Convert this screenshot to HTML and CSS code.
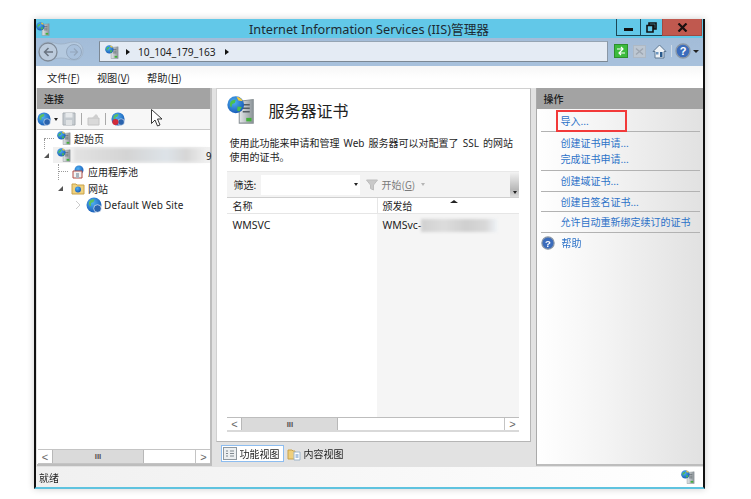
FILE: index.html
```html
<!DOCTYPE html>
<html lang="zh">
<head>
<meta charset="utf-8">
<title>IIS</title>
<link rel="stylesheet" href="styles.css">
</head>
<body>
<svg class="defs" width="0" height="0">
  <defs>
    <linearGradient id="srv" x1="0" x2="1" y1="0" y2="0"><stop offset="0" stop-color="#e6e9eb"/><stop offset="1" stop-color="#8b9398"/></linearGradient>
    <radialGradient id="glb" cx=".4" cy=".35" r=".7"><stop offset="0" stop-color="#4fb0f2"/><stop offset="1" stop-color="#1558b4"/></radialGradient>
    <symbol id="server" viewBox="0 0 16 16">
      <path d="M7 3l8-1v13.500l-8 0z" fill="url(#srv)" stroke="#8a9296" stroke-width=".6"/>
      <path d="M9 5h4M9 7h4M9 9h4" stroke="#555d62" stroke-width=".8"/>
      <rect x="11" y="12.500" width="3" height="2" fill="#43b03a"/>
      <circle cx="5" cy="5" r="4.800" fill="url(#glb)"/>
      <path d="M2 3.500c.8-1.200 2-1.500 3-1.300l-.5 1.800-1.500.5-.5 2C1.500 6 1.500 4.500 2 3.500zM6 6l2.500.3-1.500 2.500-1.200-.5z" fill="#4cc04a"/>
      <path d="M5.500.5c1.500 0 3 1 3.500 2.500l-2.500-.5z" fill="#f5cc3c"/>
    </symbol>
    <symbol id="globe" viewBox="0 0 16 16">
      <circle cx="8" cy="8" r="7.500" fill="url(#glb)"/>
      <path d="M3 5c1.500-2.500 4-3 5.500-2.500l-1 2.500-2.500 1 0 3C3.500 9.500 2.500 7 3 5zM9 8l4 .5-2 4-2-1z" fill="#5cc05e"/>
      <circle cx="11.500" cy="11.500" r="3.800" fill="#2a63ae" stroke="#fff" stroke-width=".6"/>
    </symbol>
  </defs>
</svg>

<div class="window">
  <header class="titlebar">
    <svg class="title-icon"><use href="#server"/></svg>
    <div class="title-text">Internet Information Services (IIS)管理器</div>
    <div class="win-buttons">
      <div class="win-btn min"><span class="min-glyph"></span></div>
      <div class="win-btn max"><svg width="11" height="11" viewBox="0 0 11 11"><path d="M3 1h7v6H8V3H3zM1 3.500h6v6.500H1z" fill="none" stroke="#111" stroke-width="1.600"/></svg></div>
      <div class="win-btn close"><svg width="11" height="9" viewBox="0 0 11 9"><path d="M1.500 .5l8 8M9.500 .5l-8 8" stroke="#1a1010" stroke-width="2.200"/></svg></div>
    </div>
  </header>

  <nav class="navbar">
    <div class="nav-arrows">
      <svg width="46" height="24" viewBox="0 0 46 24">
        <path d="M1 12c0-6 4-9 9-9 6 0 7 2 13 2s7-2 13-2c5 0 9 3 9 9s-4 9-9 9c-6 0-7-2-13-2s-7 2-13 2C5 21 1 18 1 12z" fill="#b4c9df" stroke="#a0b4ca"/>
        <circle cx="10" cy="13" r="9" fill="#bccbdc" stroke="#7f8a97" stroke-width="1.300"/>
        <path d="M15 13H6.500M10.500 9L6.500 13l4 4" fill="none" stroke="#6a7480" stroke-width="1.500"/>
        <circle cx="36" cy="13" r="7.500" fill="#a9c1dc" stroke="#94a8be"/>
        <path d="M32 13h7.500M36 9.500l3.500 3.500-3.500 3.500" fill="none" stroke="#93a6bb" stroke-width="1.200"/>
      </svg>
    </div>
    <div class="address">
      <svg class="ico14"><use href="#server"/></svg>
      <span class="tri"></span>
      <span class="addr-text">10_104_179_163</span>
      <span class="tri"></span>
    </div>
    <div class="nav-tools">
      <svg width="14" height="14" viewBox="0 0 14 14"><rect x=".5" y=".5" width="13" height="13" fill="#3cbb3c" stroke="#2d8f2d"/><path d="M3 5h6M7 3l2 2-2 2M11 9H5M7 7L5 9l2 2" fill="none" stroke="#fff" stroke-width="1.200"/></svg>
      <svg width="13" height="13" viewBox="0 0 13 13"><rect x=".5" y=".5" width="12" height="12" fill="#bdc7d2" stroke="#aeb9c5"/><path d="M3 3.500l7 6M10 3.500l-7 6" stroke="#9ea7b2" stroke-width="1.400"/></svg>
      <svg class="home" width="15" height="15" viewBox="0 0 15 15"><path d="M7.500 1L1 7.500h2V14h9V7.500h2z" fill="#eef2f6" stroke="#5e7892"/><rect x="8" y="8" width="2.500" height="5" fill="#2a5a8c"/><rect x="4" y="8" width="2.500" height="2.500" fill="#6c96c0"/></svg>
      <span class="tool-sep"></span>
      <svg width="16" height="16" viewBox="0 0 16 16"><circle cx="8" cy="8" r="7" fill="#3b6cbc" stroke="#8a97a6" stroke-width="1.400"/><text x="8" y="12" class="qmark">?</text></svg>
      <span class="down-tri"></span>
    </div>
  </nav>

  <div class="menubar">
    <span>文件(<u>F</u>)</span><span>视图(<u>V</u>)</span><span>帮助(<u>H</u>)</span>
  </div>

  <main class="main">
    <section class="panel left">
      <div class="panel-head">连接</div>
      <div class="conn-tools">
        <svg width="14" height="14" viewBox="0 0 16 16"><use href="#globe"/></svg>
        <span class="down-tri small"></span>
        <svg width="14" height="14" viewBox="0 0 14 14"><path d="M1 1h12v12H1z" fill="#c5cbd0" stroke="#a8aeb3"/><rect x="3.500" y="1" width="7" height="4.500" fill="#e7eaec"/><rect x="4" y="8" width="6" height="5" fill="#dfe2e4"/></svg>
        <span class="sep"></span>
        <svg width="13" height="13" viewBox="0 0 13 13"><path d="M1 5h11v7H1z" fill="#d9d9d9" stroke="#c4c4c4"/><path d="M5 5l4-4 2 2v2z" fill="#cfcfcf"/></svg>
        <span class="sep"></span>
        <svg width="14" height="14" viewBox="0 0 16 16"><use href="#globe"/><circle cx="5" cy="11.500" r="3.500" fill="#d22b3a"/></svg>
        <svg class="cursor" width="11" height="18" viewBox="0 0 11 18"><path d="M.5.500v14l3.500-3.500 2.500 6 2.500-1-2.500-6h4.500z" fill="#fff" stroke="#222" stroke-width=".9"/></svg>
      </div>
      <div class="tree">
        <div class="row lvl0"><span class="dots first-dots"></span><svg class="ico14"><use href="#server"/></svg><span>起始页</span></div>
        <div class="row lvl0 selected"><span class="exp-open"></span><svg class="ico14"><use href="#server"/></svg><span class="blurred name"></span><span class="nine">9</span></div>
        <div class="row lvl1"><span class="dots pool-dots"></span>
          <svg class="ico14" viewBox="0 0 14 14"><circle cx="8" cy="5" r="4.500" fill="url(#glb)"/><path d="M2 6h9v7H2z" fill="#f3f3f3" stroke="#b04a44"/><rect x="5" y="8" width="3" height="5" fill="#a8b4be"/></svg>
          <span>应用程序池</span></div>
        <div class="row lvl1"><span class="exp-open"></span>
          <svg class="ico14" viewBox="0 0 14 14"><path d="M1 3h4l1 1h7v9H1z" fill="#f0d27e" stroke="#c8a24a"/><circle cx="7" cy="8.500" r="3" fill="url(#glb)"/></svg>
          <span>网站</span></div>
        <div class="row lvl2"><span class="exp-closed"></span><svg class="ico15" viewBox="0 0 16 16"><use href="#globe"/></svg><span class="latin">Default Web Site</span></div>
      </div>
      <div class="scrollbar">
        <span class="sb-btn">&lt;</span>
        <span class="sb-thumb left-thumb">III</span>
        <span class="sb-track"></span>
        <span class="sb-btn">&gt;</span>
      </div>
    </section>

    <div class="center-col">
      <section class="panel center">
        <div class="page-head">
          <svg class="big-icon" viewBox="0 0 16 16"><use href="#server"/></svg>
          <h1>服务器证书</h1>
        </div>
        <p class="desc">使用此功能来申请和管理 Web 服务器可以对配置了 SSL 的网站<br>使用的证书。</p>
        <div class="list-box">
          <div class="filter">
            <span class="filter-label">筛选:</span>
            <div class="filter-input"><span class="down-tri small"></span></div>
            <svg width="12" height="12" viewBox="0 0 12 12"><path d="M.5 1h11L7.500 6v5l-3-1.500V6z" fill="#c9c9c9" stroke="#bdbdbd"/></svg>
            <span class="start">开始(<u>G</u>)</span>
            <span class="down-tri small pale"></span>
            <span class="filter-grip"><span class="down-tri small"></span></span>
          </div>
          <div class="list-head">
            <span class="col1">名称</span>
            <span class="col2">颁发给<span class="sort-up"></span></span>
          </div>
          <div class="list-body">
            <div class="col1 cell">WMSVC</div>
            <div class="col2 cell alt">WMSvc-<span class="blurred issuer"></span></div>
          </div>
          <div class="scrollbar inner">
            <span class="sb-btn">&lt;</span>
            <span class="sb-thumb center-thumb">III</span>
            <span class="sb-track"></span>
            <span class="sb-btn">&gt;</span>
          </div>
        </div>
      </section>
      <div class="tabs">
        <div class="tab active">
          <svg width="14" height="13" viewBox="0 0 14 13"><rect x=".5" y=".5" width="13" height="12" fill="#eceff1" stroke="#8f989f"/><path d="M3 4h2M3 6.500h2M3 9h2M7 4h4M7 6.500h4M7 9h4" stroke="#7f888f"/></svg>
          <span>功能视图</span>
        </div>
        <div class="tab">
          <svg width="14" height="14" viewBox="0 0 14 14"><path d="M1 3h4l1 1h2v8H1z" fill="#efcf7c" stroke="#c8a24a"/><path d="M7 5h6v8H7z" fill="#fff" stroke="#9db4c8"/><path d="M8.500 8h3M8.500 10h3" stroke="#5a8ac0"/></svg>
          <span>内容视图</span>
        </div>
      </div>
    </div>

    <section class="panel right">
      <div class="panel-head">操作</div>
      <ul class="actions">
        <li class="act first">导入...</li>
        <li class="act group top">创建证书申请...</li>
        <li class="act second">完成证书申请...</li>
        <li class="act group">创建域证书...</li>
        <li class="act group">创建自签名证书...</li>
        <li class="act group">允许自动重新绑定续订的证书</li>
        <li class="act group help">
          <svg width="14" height="14" viewBox="0 0 16 16"><circle cx="8" cy="8" r="7" fill="#3b6cbc" stroke="#8a97a6" stroke-width="1.400"/><text x="8" y="12" class="qmark">?</text></svg>
          帮助
        </li>
      </ul>
      <div class="highlight"></div>
    </section>
  </main>

  <footer class="statusbar">
    <span>就绪</span>
    <svg class="ico14"><use href="#server"/></svg>
  </footer>
</div>
</body>
</html>
```
FILE: styles.css
```css
* { box-sizing: border-box; }
html, body { margin: 0; padding: 0; background: #fff; }
body {
  width: 751px;
  height: 499px;
  overflow: hidden;
  padding: 19px 0 0 34px;
  font-family: "Noto Sans CJK SC", "Noto Sans", sans-serif;
  font-size: 10px;
  color: #1e1e1e;
}
u { text-decoration: underline; text-underline-offset: 1px; }
.defs { position: absolute; }
.ico14 { width: 14px; height: 14px; flex: none; }
.ico15 { width: 16px; height: 16px; flex: none; margin-right: -1px; }

.window {
  width: 671px;
  height: 470px;
  display: flex;
  flex-direction: column;
  background: #e2e2e2;
  border-left: 2px solid #111;
  border-right: 2px solid #111;
  border-bottom: 2px solid #5fc3df;
  box-shadow: 0 0 7px rgba(0, 0, 0, .2);
  filter: blur(.35px);
}

.titlebar {
  height: 19px;
  flex: none;
  background: #62c8e8;
  display: flex;
  align-items: center;
}
.title-icon { width: 14px; height: 14px; flex: none; }
.title-text {
  font-family: "Noto Sans", "Noto Sans CJK SC", sans-serif;
  font-size: 12.700px;
  color: #1d2b33;
  margin-left: 199px;
  white-space: nowrap;
  flex: 1;
}
.win-buttons { display: flex; height: 17px; align-self: flex-start; margin-right: 1px; }
.win-btn {
  height: 17px;
  display: flex;
  align-items: center;
  justify-content: center;
  border: 1px solid #1c4655;
  border-top: none;
}
.min { width: 24px; border-right: none; }
.max { width: 22px; border-right: none; }
.close { width: 40px; background: #c0594f; border-color: #9e4a42; }
.min-glyph { width: 9px; height: 3px; background: #111; margin-top: 4px; }

.navbar {
  height: 28px;
  flex: none;
  background: linear-gradient(#a3bcd8, #a8c1dc);
  display: flex;
  align-items: flex-start;
  padding: 3px 0 0 2px;
}
.nav-arrows { width: 46px; height: 22px; flex: none; margin-top: -2px; }
.address {
  width: 509px;
  height: 21px;
  flex: none;
  margin-left: 15px;
  background: #e4ebf4;
  border: 1px solid #7c8894;
  border-top-color: #95a4b3;
  border-right-color: #8997a6;
  display: flex;
  align-items: center;
  padding-left: 5px;
  font-size: 10.200px;
  font-family: "Noto Sans", sans-serif;
  color: #222;
}
.addr-text { margin: 0 9px 0 8px; }
.tri {
  width: 0;
  height: 0;
  margin-left: 7px;
  border-left: 4px solid #111;
  border-top: 3px solid transparent;
  border-bottom: 3px solid transparent;
}
.addr-text + .tri { margin-left: 0; }
.nav-tools { display: flex; flex: none; align-items: center; gap: 5px; margin-left: 6px; height: 20px; }
.home { margin-left: 1px; }
.tool-sep { width: 1px; height: 12px; background: #cfdbe7; margin: 0 -2px 0 -1px; }
.nav-tools .down-tri { margin-left: -3px; }
.down-tri {
  width: 0;
  height: 0;
  border-top: 3px solid #222;
  border-left: 3px solid transparent;
  border-right: 3px solid transparent;
}
.qmark { font: bold 11px "Liberation Sans", sans-serif; fill: #fff; text-anchor: middle; }

.menubar {
  height: 22px;
  flex: none;
  background: linear-gradient(#f7f7f7, #fff 60%);
  display: flex;
  align-items: center;
  gap: 17px;
  padding-left: 11px;
  font-size: 10.200px;
  white-space: nowrap;
}

.main {
  flex: 1;
  min-height: 0;
  display: flex;
  padding: 0 0 0 1px;
}
.panel { display: flex; flex-direction: column; position: relative; }
.panel-head {
  height: 21px;
  flex: none;
  background: #a3a3a3;
  display: flex;
  align-items: center;
  padding-left: 7px;
  font-weight: 500;
  color: #1a1a1a;
}

.left {
  width: 176px;
  background: #fff;
  border-right: 2px solid #bdbdbd;
  border-bottom: 2px solid #bdbdbd;
  margin-bottom: 1px;
}
.conn-tools {
  height: 21px;
  flex: none;
  display: flex;
  align-items: center;
  gap: 3px;
  padding-left: 0;
  background: #f7f7f7;
  border-bottom: 1px solid #c9c9c9;
  position: relative;
}
.conn-tools .small { margin-right: 1px; }
.sep { width: 1px; height: 12px; background: #a9a9a9; margin: 0 2px; }
.cursor { position: absolute; left: 114px; top: 0; }
.down-tri.small { border-width: 3px 2.500px 0; }
.pale { border-top-color: #b5b5b5; margin-left: 6px; }

.tree { flex: 1; }
.row {
  height: 16.700px;
  display: flex;
  align-items: center;
  gap: 3px;
  white-space: nowrap;
  position: relative;
}
.lvl0 { padding-left: 7px; }
.lvl1 { padding-left: 21px; }
.lvl2 { padding-left: 39px; }
.dots { width: 10px; border-top: 1px dotted #9a9a9a; flex: none; position: relative; }
.dots::before {
  content: "";
  position: absolute;
  left: 0;
  width: 0;
  border-left: 1px dotted #9a9a9a;
}
.first-dots::before { top: 0; height: 10px; }
.pool-dots::before { top: -8px; height: 16px; }
.exp-open {
  width: 0;
  height: 0;
  flex: none;
  margin-right: 5px;
  border-bottom: 5px solid #555;
  border-left: 5px solid transparent;
}
.exp-closed {
  width: 0;
  height: 0;
  flex: none;
  margin-right: 3px;
  border-left: 4px solid #fff;
  border-top: 4px solid transparent;
  border-bottom: 4px solid transparent;
  filter: drop-shadow(0 0 .5px #333);
}
.selected { background: linear-gradient(90deg, transparent 16px, #f0f0f0 16px); }
.latin { font-family: "Noto Sans", sans-serif; letter-spacing: .1px; }
.blurred { display: inline-block; filter: blur(1.500px); }
.name {
  width: 132px;
  height: 14px;
  background: linear-gradient(90deg, #e2e2e2, #d4d4d4 40%, #dde3e8 70%, #d6d6d6 85%, #eee);
}
.nine { position: absolute; left: 169px; }

.scrollbar {
  height: 15px;
  flex: none;
  display: flex;
  background: #fff;
  border-top: 1px solid #c4c4c4;
  border-bottom: 1px solid #c4c4c4;
  margin-left: 1px;
}
.sb-btn {
  width: 14px;
  flex: none;
  display: flex;
  align-items: center;
  justify-content: center;
  font-family: "Liberation Sans", sans-serif;
  color: #666;
  font-size: 11px;
}
.sb-thumb {
  flex: none;
  background: #dadada;
  border-left: 1px solid #b8b8b8;
  border-right: 1px solid #b8b8b8;
  display: flex;
  align-items: center;
  justify-content: center;
  font-family: "Liberation Sans", sans-serif;
  font-size: 8px;
  font-weight: bold;
  color: #555;
}
.left-thumb { width: 92px; }
.center-thumb { width: 97px; }
.sb-track { flex: 1; border-right: 1px solid #c4c4c4; }

.center-col {
  width: 315px;
  margin-left: 4px;
  display: flex;
  flex-direction: column;
}
.center {
  flex: none;
  height: 354px;
  background: #fff;
  border-right: 1px solid #b5b5b5;
  border-bottom: 1px solid #b5b5b5;
  border-left: 1px solid #d0d0d0;
  border-top: 1px solid #d0d0d0;
  padding: 7px 11px 0 10px;
}
.page-head { display: flex; align-items: center; height: 28px; gap: 13px; }
.big-icon { width: 28px; height: 28px; flex: none; }
h1 { margin: 0; font-size: 16px; font-weight: 400; color: #222; }
.desc {
  margin: 12px 0 0 2px;
  width: 292px;
  font-size: 10px;
  line-height: 14px;
  word-spacing: 1.500px;
  white-space: nowrap;
  font-family: "Noto Sans", "Noto Sans CJK SC", sans-serif;
}
.list-box { margin-top: 7px; display: flex; flex-direction: column; width: 292px; height: 261px; }
.filter {
  height: 26px;
  flex: none;
  display: flex;
  align-items: center;
  background: #f3f3f3;
  border-top: 1px solid #e8e8e8;
  padding-left: 6px;
  position: relative;
}
.filter-label { width: 28px; }
.filter-input {
  width: 99px;
  height: 20px;
  background: #fff;
  display: flex;
  align-items: center;
  justify-content: flex-end;
  padding-right: 2px;
  margin-right: 6px;
}
.start { margin-left: 3px; color: #7a7a7a; }
.filter-grip {
  margin-left: auto;
  width: 9px;
  height: 100%;
  background: linear-gradient(#f3f3f3, #b8b8b8 70%, #ddd);
  display: flex;
  align-items: flex-end;
  justify-content: center;
  padding-bottom: 3px;
}
.list-head {
  height: 17px;
  flex: none;
  display: flex;
  border-top: 1px solid #cfcfcf;
  border-bottom: 1px solid #e6e6e6;
  background: #fff;
  font-size: 10px;
}
.col1 { width: 150px; padding-left: 5px; flex: none; }
.col2 { flex: 1; padding-left: 4px; position: relative; border-left: 1px solid #e6e6e6; }
.sort-up {
  position: absolute;
  left: 72px;
  top: 2px;
  width: 0;
  height: 0;
  border-bottom: 3px solid #222;
  border-left: 4px solid transparent;
  border-right: 4px solid transparent;
}
.list-body { flex: 1; display: flex; min-height: 0; }
.cell { font-family: "Noto Sans", sans-serif; padding-top: 4px; font-size: 10.500px; line-height: 15px; }
.alt { background: #f5f5f5; white-space: nowrap; border-left: none; padding-left: 5px; }
.issuer {
  width: 76px;
  height: 13px;
  vertical-align: -3px;
  background: linear-gradient(90deg, #d0d0d0, #dcdcdc 30%, #cfcfcf 60%, #d8d8d8 85%, #eef2f6);
}
.inner { margin-left: 0; border-top-color: #bdbdbd; border-bottom: 2px solid #d9d9d9; }

.tabs { display: flex; align-items: center; gap: 2px; padding: 3px 0 0 5px; }
.tab { height: 17px; display: flex; align-items: center; gap: 2px; padding: 0 2px 0 1px; }
.active { background: #fff; border: 1px solid #8dbdf0; width: 63px; }

.right {
  width: 167px;
  margin-left: 5px;
  border-left: 1px solid #aaa;
  border-bottom: 2px solid #bdbdbd;
  background: linear-gradient(90deg, #fff, #f4f4f4 40%, #e1e1e1);
  margin-bottom: 1px;
}
.right .panel-head { padding-left: 6px; }
.actions { list-style: none; margin: 0; padding: 0 3px 0 4px; color: #2c72c8; }
.act { padding-left: 19px; white-space: nowrap; }
.first { height: 22px; line-height: 24px; }
.group { border-top: 1px solid #b2b2b2; height: 20.700px; line-height: 19px; }
.top { height: 20px; line-height: 22px; }
.second { height: 19px; line-height: 16px; }
.act.help { display: flex; align-items: center; gap: 6px; padding-left: 0; }
.highlight {
  position: absolute;
  left: 19px;
  top: 22px;
  width: 71px;
  height: 22px;
  border: 2px solid #f23a3a;
}

.statusbar {
  height: 20px;
  flex: none;
  display: flex;
  align-items: center;
  justify-content: space-between;
  padding: 0 8px 0 3px;
  background: linear-gradient(90deg, #f0f0f0, #fff);
}
```
